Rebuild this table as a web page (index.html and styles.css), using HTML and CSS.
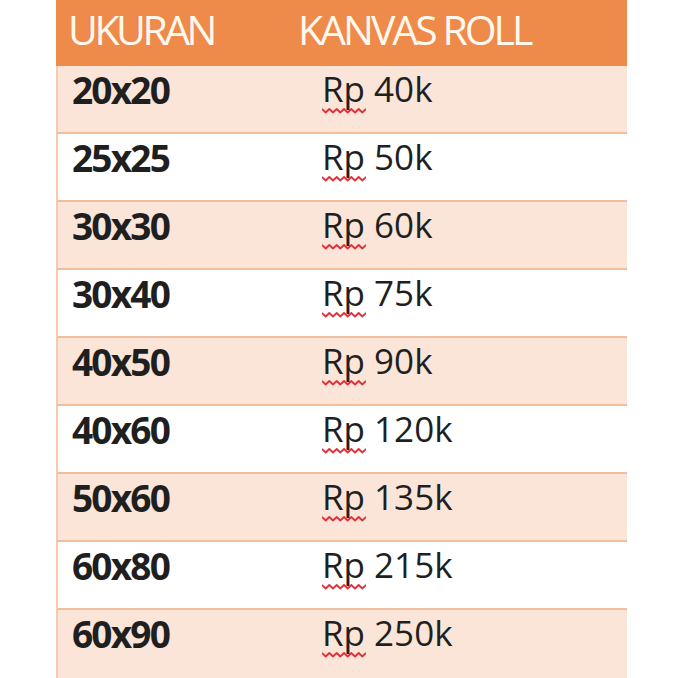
FILE: index.html
```html
<!DOCTYPE html>
<html>
<head>
<meta charset="utf-8">
<link rel="stylesheet" href="styles.css">
</head>
<body>
<div class="table">
  <div class="head">
    <div class="hcell">UKURAN</div>
    <div class="hcell hcell-2">KANVAS ROLL</div>
  </div>
  <div class="row odd"><div class="size">20x20</div><div class="price"><span class="sq">Rp<svg class="wave" viewBox="0 0 44 7"><polyline points="0,2 3.7,5.5 7.3,2 11,5.5 14.7,2 18.3,5.5 22,2 25.7,5.5 29.3,2 33,5.5 36.7,2 40.3,5.5 44,2"/></svg></span> 40k</div></div>
  <div class="row"><div class="size">25x25</div><div class="price"><span class="sq">Rp<svg class="wave" viewBox="0 0 44 7"><polyline points="0,2 3.7,5.5 7.3,2 11,5.5 14.7,2 18.3,5.5 22,2 25.7,5.5 29.3,2 33,5.5 36.7,2 40.3,5.5 44,2"/></svg></span> 50k</div></div>
  <div class="row odd"><div class="size">30x30</div><div class="price"><span class="sq">Rp<svg class="wave" viewBox="0 0 44 7"><polyline points="0,2 3.7,5.5 7.3,2 11,5.5 14.7,2 18.3,5.5 22,2 25.7,5.5 29.3,2 33,5.5 36.7,2 40.3,5.5 44,2"/></svg></span> 60k</div></div>
  <div class="row"><div class="size">30x40</div><div class="price"><span class="sq">Rp<svg class="wave" viewBox="0 0 44 7"><polyline points="0,2 3.7,5.5 7.3,2 11,5.5 14.7,2 18.3,5.5 22,2 25.7,5.5 29.3,2 33,5.5 36.7,2 40.3,5.5 44,2"/></svg></span> 75k</div></div>
  <div class="row odd"><div class="size">40x50</div><div class="price"><span class="sq">Rp<svg class="wave" viewBox="0 0 44 7"><polyline points="0,2 3.7,5.5 7.3,2 11,5.5 14.7,2 18.3,5.5 22,2 25.7,5.5 29.3,2 33,5.5 36.7,2 40.3,5.5 44,2"/></svg></span> 90k</div></div>
  <div class="row"><div class="size">40x60</div><div class="price"><span class="sq">Rp<svg class="wave" viewBox="0 0 44 7"><polyline points="0,2 3.7,5.5 7.3,2 11,5.5 14.7,2 18.3,5.5 22,2 25.7,5.5 29.3,2 33,5.5 36.7,2 40.3,5.5 44,2"/></svg></span> 120k</div></div>
  <div class="row odd"><div class="size">50x60</div><div class="price"><span class="sq">Rp<svg class="wave" viewBox="0 0 44 7"><polyline points="0,2 3.7,5.5 7.3,2 11,5.5 14.7,2 18.3,5.5 22,2 25.7,5.5 29.3,2 33,5.5 36.7,2 40.3,5.5 44,2"/></svg></span> 135k</div></div>
  <div class="row"><div class="size">60x80</div><div class="price"><span class="sq">Rp<svg class="wave" viewBox="0 0 44 7"><polyline points="0,2 3.7,5.5 7.3,2 11,5.5 14.7,2 18.3,5.5 22,2 25.7,5.5 29.3,2 33,5.5 36.7,2 40.3,5.5 44,2"/></svg></span> 215k</div></div>
  <div class="row odd last"><div class="size">60x90</div><div class="price"><span class="sq">Rp<svg class="wave" viewBox="0 0 44 7"><polyline points="0,2 3.7,5.5 7.3,2 11,5.5 14.7,2 18.3,5.5 22,2 25.7,5.5 29.3,2 33,5.5 36.7,2 40.3,5.5 44,2"/></svg></span> 250k</div></div>
</div>
</body>
</html>
```
FILE: styles.css
```css
html, body {
  margin: 0;
  padding: 0;
  background: #ffffff;
  height: 678px;
  overflow: hidden;
}
.table {
  margin-left: 56px;
  width: 571px;
  font-family: "Open Sans", "Noto Sans", sans-serif;
  color: #1f1f1f;
}
.head {
  display: grid;
  grid-template-columns: 242px 1fr;
  height: 66px;
  background: #ee8a4a;
  color: #fff8ee;
}
.hcell {
  font-size: 41px;
  line-height: 1;
  padding-top: 9px;
  padding-left: 12px;
  letter-spacing: -3.5px;
  font-weight: 400;
}
.hcell-2 {
  padding-left: 0;
  letter-spacing: -3px;
}
.row {
  display: grid;
  grid-template-columns: 264px 1fr;
  height: 66px;
  border-bottom: 2px solid #f2bea0;
  border-left: 2px solid #f6cbb2;
  background: #ffffff;
}
.row.odd {
  background: #fbe5d8;
}
.row.last {
  border-bottom: none;
  height: 68px;
}
.size {
  font-size: 37px;
  font-weight: 700;
  line-height: 1;
  letter-spacing: -1.8px;
  padding-left: 14px;
  padding-top: 5px;
}
.price {
  font-size: 35px;
  line-height: 1;
  padding-top: 5px;
}
.sq {
  position: relative;
}
.wave {
  position: absolute;
  left: 0;
  top: 42px;
  width: 44px;
  height: 7px;
  fill: none;
  stroke: #e0303a;
  stroke-width: 1.8;
  stroke-linejoin: round;
}
```
